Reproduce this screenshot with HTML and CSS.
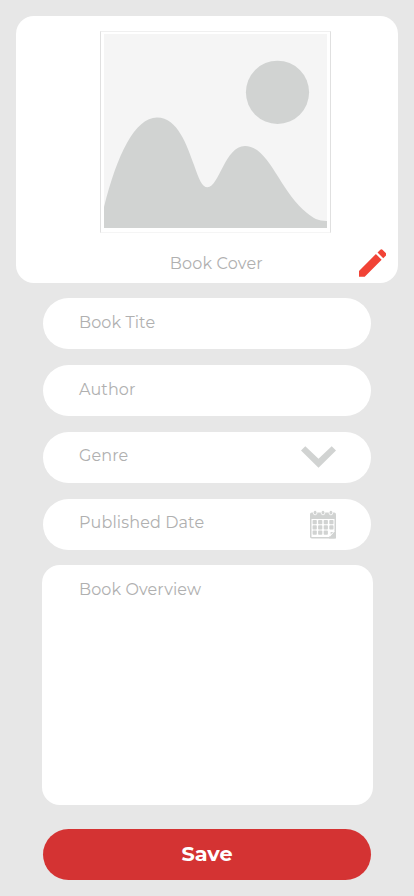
FILE: index.html
```html
<!DOCTYPE html>
<html lang="en">
<head>
<meta charset="utf-8">
<title>Book</title>
<link rel="stylesheet" href="styles.css">
</head>
<body>
<main class="screen">
  <section class="cover">
    <div class="frame">
      <svg class="picture" viewBox="0 0 223 194">
        <rect width="223" height="194" fill="#f5f5f5"/>
        <circle cx="173.500" cy="58.300" r="31.600" fill="#d1d3d2"/>
        <path fill="#d1d3d2" d="M0 173C13 121 31 83.500 53 83.500C74 83.500 83 112 90 131C95 145 98 153.300 103.500 153.300C115 153.300 121 112 141 112C165 112 176 158 203 179C209 184 214 187 223 187V194H0Z"/>
      </svg>
    </div>
    <div class="caption"><span class="label">Book Cover</span></div>
    <svg class="pencil" viewBox="3 3 18 18"><path fill="#f14336" d="M3 17.250V21h3.750L17.810 9.940l-3.750-3.750L3 17.250zM20.710 7.040a1 1 0 0 0 0-1.410l-2.340-2.340a1 1 0 0 0-1.410 0l-1.830 1.830 3.750 3.750 1.830-1.830z"/></svg>
  </section>
  <div class="field upper"><span class="label">Book Tite</span></div>
  <div class="field upper"><span class="label">Author</span></div>
  <div class="field"><span class="label">Genre</span>
    <svg class="chevron" viewBox="0 0 35 22"><path fill="#d1d3d2" d="M0 4.400L4.300 0.200L17.500 12.700L30.700 0.200L35 4.400L17.500 21.700Z"/></svg>
  </div>
  <div class="field"><span class="label">Published Date</span>
    <svg class="calendar" viewBox="0 0 26 29">
      <rect y="2.500" width="26" height="26" rx="1.800" fill="#d1d3d2"/>
      <path fill="#fff" d="M1.500 9H24.500V21L19 27H1.500Z"/>
      <g fill="#d1d3d2">
        <rect x="2.600" y="10" width="4.200" height="4.200" rx=".8"/><rect x="8.100" y="10" width="4.200" height="4.200" rx=".8"/><rect x="13.700" y="10" width="4.200" height="4.200" rx=".8"/><rect x="19.300" y="10" width="4.200" height="4.200" rx=".8"/>
        <rect x="2.600" y="15.300" width="4.200" height="4.200" rx=".8"/><rect x="8.100" y="15.300" width="4.200" height="4.200" rx=".8"/><rect x="13.700" y="15.300" width="4.200" height="4.200" rx=".8"/><rect x="19.300" y="15.300" width="4.200" height="4.200" rx=".8"/>
        <rect x="2.600" y="20.600" width="4.200" height="4.200" rx=".8"/><rect x="8.100" y="20.600" width="4.200" height="4.200" rx=".8"/><rect x="13.700" y="20.600" width="4.200" height="4.200" rx=".8"/>
      </g>
      <path fill="#d1d3d2" d="M19 28.500H26V20L24.500 21L19 27Z"/>
      <path fill="#fff" d="M19.600 27V22.500Q19.600 21 21.100 21H25Z"/>
      <path fill="#d1d3d2" d="M20.600 24.600V22.600Q20.600 21.900 21.400 21.900H23.300Z"/>
      <g fill="#d1d3d2" stroke="#fff" stroke-width=".8"><rect x="3.300" y=".4" width="3.600" height="4.400" rx="1.800"/><rect x="11.200" y=".4" width="3.600" height="4.400" rx="1.800"/><rect x="19.100" y=".4" width="3.600" height="4.400" rx="1.800"/></g>
    </svg>
  </div>
  <div class="overview"><span class="label">Book Overview</span></div>
  <button class="save">Save</button>
</main>
</body>
</html>
```
FILE: styles.css
```css
* { box-sizing: border-box; }
body { margin: 0; background: #e7e7e7; font-family: Montserrat, Inter, sans-serif; }
.screen { width: 414px; height: 896px; padding-top: 15.700px; display: flex; flex-direction: column; align-items: center; overflow: hidden; }
.cover { position: relative; width: 382.600px; height: 267px; flex: none; background: #fff; border-radius: 18px; padding: 15px 0 0 84.300px; margin-bottom: 15.300px; }
.frame { width: 231px; height: 202px; padding: 2.300px 3px; border: 1px solid #e0e0e0; border-top-color: #f0f0f0; border-bottom-color: #f5f5f5; }
.picture { display: block; width: 223px; height: 194px; }
.caption { padding: 21px 0 0 69.700px; }
.caption .label { letter-spacing: 0.200px; }
.label { display: block; font-size: 16px; line-height: 20px; font-weight: 400; letter-spacing: 0.120px; color: #b0b0b0; white-space: nowrap; }
.pencil { position: absolute; right: 12px; bottom: 6px; width: 27.500px; height: 28px; }
.field { width: 328px; height: 51.300px; flex: none; margin-bottom: 15.600px; padding: 14.500px 35px 0 36px; border-radius: 26px; background: #fff; display: flex; justify-content: space-between; align-items: flex-start; }
.field.upper { padding-top: 15.300px; }
.chevron { width: 35px; height: 22px; }
.calendar { width: 26px; height: 29px; margin-top: -3.500px; }
.overview { width: 331px; height: 240px; flex: none; margin: -0.500px 0 23.800px; border-radius: 18px; background: #fff; padding: 15px 37.500px; }
.save { width: 328px; height: 51.500px; flex: none; border: 0; border-radius: 26px; padding: 0 0 2px; background: #d43333; color: #fff; font: 700 20.800px/49px Montserrat, Inter, sans-serif; }
```
